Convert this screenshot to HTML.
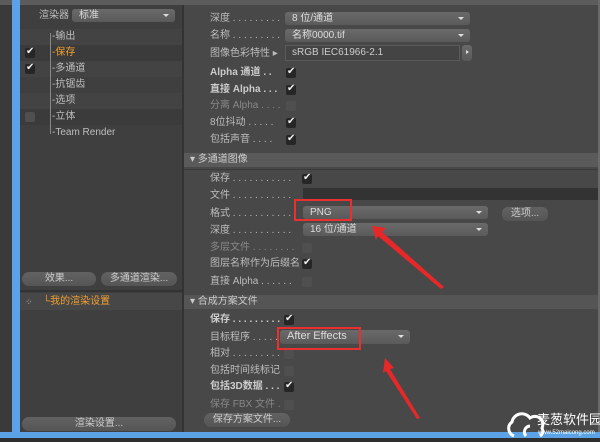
<!DOCTYPE html>
<html><head><meta charset="utf-8"><style>
*{margin:0;padding:0;box-sizing:border-box}
body{width:600px;height:442px;overflow:hidden;background:#3a3a3a;position:relative;font-family:"Liberation Sans","Noto Sans CJK SC",sans-serif;font-size:10px;color:#bdbdbd}
.a{position:absolute}
.t{position:absolute;white-space:nowrap;line-height:12px}
.dd{position:absolute;background:linear-gradient(#6a6a6a,#5a5a5a);border-radius:3px;color:#ddd;padding-left:7px;line-height:13px;font-size:10px}
.dd:after{content:"";position:absolute;right:6px;top:5px;border:3px solid transparent;border-top:3px solid #ddd}
.sb{position:absolute;background:linear-gradient(#6a6a6a,#5a5a5a);border-radius:3px}
.sb:after{content:"";position:absolute;left:4px;top:5px;border:2px solid transparent;border-left:3px solid #ddd}
.cb{position:absolute;width:10px;height:10px;background:#262626;border-radius:2px}
.cb.on:after{content:"✔";position:absolute;left:1px;top:-2px;font-size:10px;color:#eee}
.cb.off{background:#4f4f4f}
.btn{position:absolute;background:linear-gradient(#626262,#555);border-radius:7px;color:#ccc;text-align:center;line-height:14px;font-size:10px}
.sec{position:absolute;left:184px;width:414px;background:#5a5a5a;color:#ccc;line-height:14px;padding-left:6px}
.dim{color:#888}
.b{font-weight:bold;color:#ccc}
</style></head><body>
<div class="a" style="left:0;top:0;width:600px;height:5px;background:#5c5c5c"></div>
<div class="a" style="left:12px;top:0;width:8px;height:438px;background:#5ba3e6"></div>
<div class="a" style="left:20px;top:5px;width:162px;height:427px;background:#3f3f3f"></div>
<div class="a" style="left:182px;top:5px;width:2px;height:427px;background:#333"></div>
<div class="a" style="left:184px;top:5px;width:414px;height:427px;background:#484848"></div>
<div class="a" style="left:598px;top:0;width:2px;height:432px;background:#6a6a6a"></div>
<div class="a" style="left:0;top:432px;width:600px;height:6px;background:#5ba3e6"></div>
<div class="a" style="left:0;top:438px;width:600px;height:4px;background:#2e2e2e"></div>

<div class="t" style="left:39px;top:10px">渲染器</div>
<div class="dd" style="left:72px;top:9px;width:103px">标准</div>
<div class="a" style="left:20px;top:29px;width:162px;height:16px;background:#434343"></div>
<div class="a" style="left:20px;top:45px;width:162px;height:16px;background:#3b3b3b"></div>
<div class="a" style="left:20px;top:61px;width:162px;height:16px;background:#434343"></div>
<div class="a" style="left:20px;top:93px;width:162px;height:16px;background:#434343"></div>
<div class="a" style="left:20px;top:109px;width:162px;height:16px;background:#3b3b3b"></div>
<div class="a" style="left:50px;top:33px;width:1px;height:101px;background:#888"></div>
<div class="t" style="left:52px;top:31px">-输出</div>
<div class="t" style="left:52px;top:47px;color:#f0a030">-保存</div>
<div class="t" style="left:52px;top:63px">-多通道</div>
<div class="t" style="left:52px;top:79px">-抗锯齿</div>
<div class="t" style="left:52px;top:95px">-选项</div>
<div class="t" style="left:52px;top:111px">-立体</div>
<div class="t" style="left:52px;top:127px">-Team Render</div>
<div class="cb on" style="left:25px;top:48px"></div>
<div class="cb on" style="left:25px;top:64px"></div>
<div class="cb off" style="left:25px;top:112px"></div>
<div class="btn" style="left:22px;top:272px;width:74px">效果...</div>
<div class="btn" style="left:101px;top:272px;width:76px">多通道渲染...</div>
<div class="a" style="left:20px;top:290px;width:162px;height:2px;background:#333"></div>
<div class="a" style="left:20px;top:293px;width:162px;height:17px;background:#474747"></div>
<div class="t" style="left:25px;top:296px;font-size:9px">⁘</div>
<div class="t" style="left:43px;top:296px;color:#f0a030">└我的渲染设置</div>
<div class="btn" style="left:22px;top:417px;width:154px">渲染设置...</div>

<div class="t" style="left:210px;top:13px">深度 . . . . . . . . .</div>
<div class="dd" style="left:285px;top:12px;width:185px">8 位/通道</div>
<div class="t" style="left:210px;top:30px">名称 . . . . . . . . .</div>
<div class="dd" style="left:285px;top:29px;width:185px">名称0000.tif</div>
<div class="t" style="left:210px;top:48px">图像色彩特性 ▸</div>
<div class="a" style="left:285px;top:45px;width:175px;height:16px;background:#444;border:1px solid #5a5a5a;color:#ccc;padding-left:6px;line-height:14px">sRGB IEC61966-2.1</div>
<div class="sb" style="left:462px;top:45px;width:10px;height:16px"></div>
<div class="t b" style="left:210px;top:67px">Alpha 通道 . .</div><div class="cb on" style="left:286px;top:68px"></div>
<div class="t b" style="left:210px;top:84px">直接 Alpha . . .</div><div class="cb on" style="left:286px;top:85px"></div>
<div class="t dim" style="left:210px;top:100px">分离 Alpha . . . .</div><div class="cb off" style="left:286px;top:101px"></div>
<div class="t" style="left:210px;top:117px">8位抖动 . . . . .</div><div class="cb on" style="left:286px;top:118px"></div>
<div class="t" style="left:210px;top:134px">包括声音 . . . .</div><div class="cb on" style="left:286px;top:135px"></div>

<div class="sec" style="top:153px;height:14px">▾ 多通道图像</div>
<div class="a" style="left:184px;top:169px;width:414px;height:1px;background:#3a3a3a"></div>
<div class="t" style="left:210px;top:173px">保存 . . . . . . . . . . .</div><div class="cb on" style="left:302px;top:174px"></div>
<div class="t" style="left:210px;top:190px">文件 . . . . . . . . . . .</div>
<div class="a" style="left:303px;top:188px;width:295px;height:12px;background:#333"></div>
<div class="t" style="left:210px;top:208px">格式 . . . . . . . . . . .</div>
<div class="dd" style="left:303px;top:206px;width:185px">PNG</div>
<div class="btn" style="left:502px;top:207px;width:46px;border-radius:6px">选项...</div>
<div class="t" style="left:210px;top:225px">深度 . . . . . . . . . . .</div>
<div class="dd" style="left:303px;top:223px;width:185px">16 位/通道</div>
<div class="t dim" style="left:210px;top:242px">多层文件 . . . . . . . .</div><div class="cb off" style="left:302px;top:243px"></div>
<div class="t" style="left:210px;top:258px">图层名称作为后缀名</div><div class="cb on" style="left:302px;top:259px"></div>
<div class="t" style="left:210px;top:276px">直接 Alpha . . . . . .</div><div class="cb off" style="left:302px;top:277px"></div>

<div class="sec" style="top:295px;height:14px;background:#555">▾ 合成方案文件</div>
<div class="t b" style="left:210px;top:314px">保存 . . . . . . . . .</div><div class="cb on" style="left:284px;top:315px"></div>
<div class="t" style="left:210px;top:332px">目标程序 . . . . . .</div>
<div class="dd" style="left:280px;top:330px;width:130px;height:14px;font-size:11px">After Effects</div>
<div class="t" style="left:210px;top:348px">相对 . . . . . . . . .</div><div class="cb off" style="left:284px;top:349px"></div>
<div class="t" style="left:210px;top:365px">包括时间线标记</div><div class="cb off" style="left:284px;top:366px"></div>
<div class="t b" style="left:210px;top:381px">包括3D数据 . . .</div><div class="cb on" style="left:284px;top:382px"></div>
<div class="t dim" style="left:210px;top:399px">保存 FBX 文件 . .</div><div class="cb off" style="left:284px;top:400px"></div>
<div class="btn" style="left:204px;top:413px;width:86px">保存方案文件...</div>

<div class="a" style="left:294px;top:199px;width:58px;height:22px;border:2px solid #e83030"></div>
<div class="a" style="left:277px;top:327px;width:84px;height:23px;border:2px solid #e83030"></div>
<svg class="a" style="left:0;top:0" width="600" height="442">
<path d="M372,226 L386,228 L382,232 L444,287 L441,289 L378,236 L376,240 Z" fill="#e82828"/>
<path d="M385,358 L394,368 L390,369 L420,418 L417,419 L386,371 L383,373 Z" fill="#e82828"/>
</svg>

<svg class="a" style="left:500px;top:408px" width="50" height="32"><path d="M14,28 A8,8 0 0 1 12,14 A10,10 0 0 1 30,10 A8,8 0 0 1 42,20 A6,6 0 0 1 40,28" fill="none" stroke="#fff" stroke-width="3"/><path d="M26,28 A6,6 0 0 1 30,18" fill="none" stroke="#fff" stroke-width="3"/></svg>
<div class="t" style="left:537px;top:412px;font-size:13px;color:#fff;line-height:15px">麦葱软件园</div>
<div class="t" style="left:538px;top:429px;font-size:6px;color:#fff;line-height:8px">www.52maicong.com</div>
</body></html>
